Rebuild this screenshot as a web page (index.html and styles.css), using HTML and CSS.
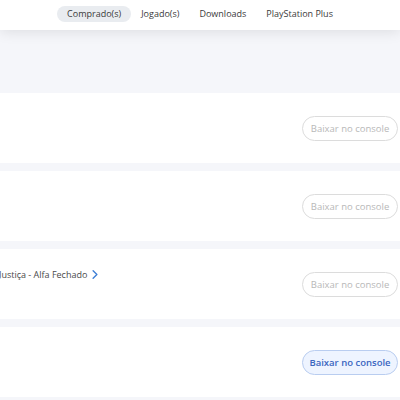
FILE: index.html
```html
<!DOCTYPE html>
<html lang="pt-BR">
<head>
<meta charset="utf-8">
<link rel="stylesheet" href="styles.css">
</head>
<body>
<header class="topbar">
  <nav class="tabs">
    <span class="tab tab-active">Comprado(s)</span>
    <span class="tab">Jogado(s)</span>
    <span class="tab">Downloads</span>
    <span class="tab">PlayStation Plus</span>
  </nav>
</header>
<section class="band"></section>
<main class="list">
  <div class="card">
    <div class="info"></div>
    <button class="btn btn-off">Baixar no console</button>
  </div>
  <div class="card">
    <div class="info"></div>
    <button class="btn btn-off">Baixar no console</button>
  </div>
  <div class="card">
    <div class="info">
      <a class="title">Justiça - Alfa Fechado <svg class="chev" viewBox="0 0 8 12" width="6" height="9"><path d="M1.5 1 L6.5 6 L1.5 11" fill="none" stroke="#3f7fd6" stroke-width="1.8" stroke-linecap="round" stroke-linejoin="round"/></svg></a>
    </div>
    <button class="btn btn-off">Baixar no console</button>
  </div>
  <div class="card">
    <div class="info"></div>
    <button class="btn btn-on">Baixar no console</button>
  </div>
</main>
</body>
</html>
```
FILE: styles.css
```css
html, body {
  margin: 0;
  padding: 0;
  background: #f5f6fa;
  font-family: "Open Sans", "Noto Sans", sans-serif;
  overflow: hidden;
}
.topbar {
  height: 30px;
  background: #ffffff;
  display: flex;
  align-items: center;
  justify-content: center;
  position: relative;
  z-index: 1;
  box-shadow: 0 2px 14px rgba(0, 0, 0, 0.10);
}
.tabs {
  display: flex;
  align-items: center;
  margin-left: 0;
  margin-top: -2px;
}
.tab {
  font-size: 9px;
  color: #3a3a3a;
  padding: 3px 10px;
  border-radius: 10px;
  line-height: 10px;
}
.tab-active {
  background: #e9ecf0;
}
.band {
  height: 63px;
}
.list {
  display: flex;
  flex-direction: column;
  gap: 8px;
}
.card {
  background: #ffffff;
  height: 70px;
  display: flex;
  align-items: center;
  justify-content: space-between;
  padding-right: 2px;
}
.info {
  align-self: flex-start;
  padding-top: 19px;
}
.title {
  font-size: 9px;
  color: #4a4a4a;
  display: flex;
  align-items: center;
  gap: 4px;
  margin-left: -1px;
}
.chev {
  margin-left: 1px;
}
.btn {
  width: 96px;
  height: 25px;
  border-radius: 13px;
  font-family: "Open Sans", "Noto Sans", sans-serif;
  font-size: 9.5px;
  padding: 0;
  background: #ffffff;
}
.btn-off {
  border: 1px solid #dcdcdc;
  color: #b8b8b8;
}
.btn-on {
  border: 1px solid #b9cdf0;
  background: #eef4ff;
  color: #3a66c0;
  font-weight: 600;
}
```
